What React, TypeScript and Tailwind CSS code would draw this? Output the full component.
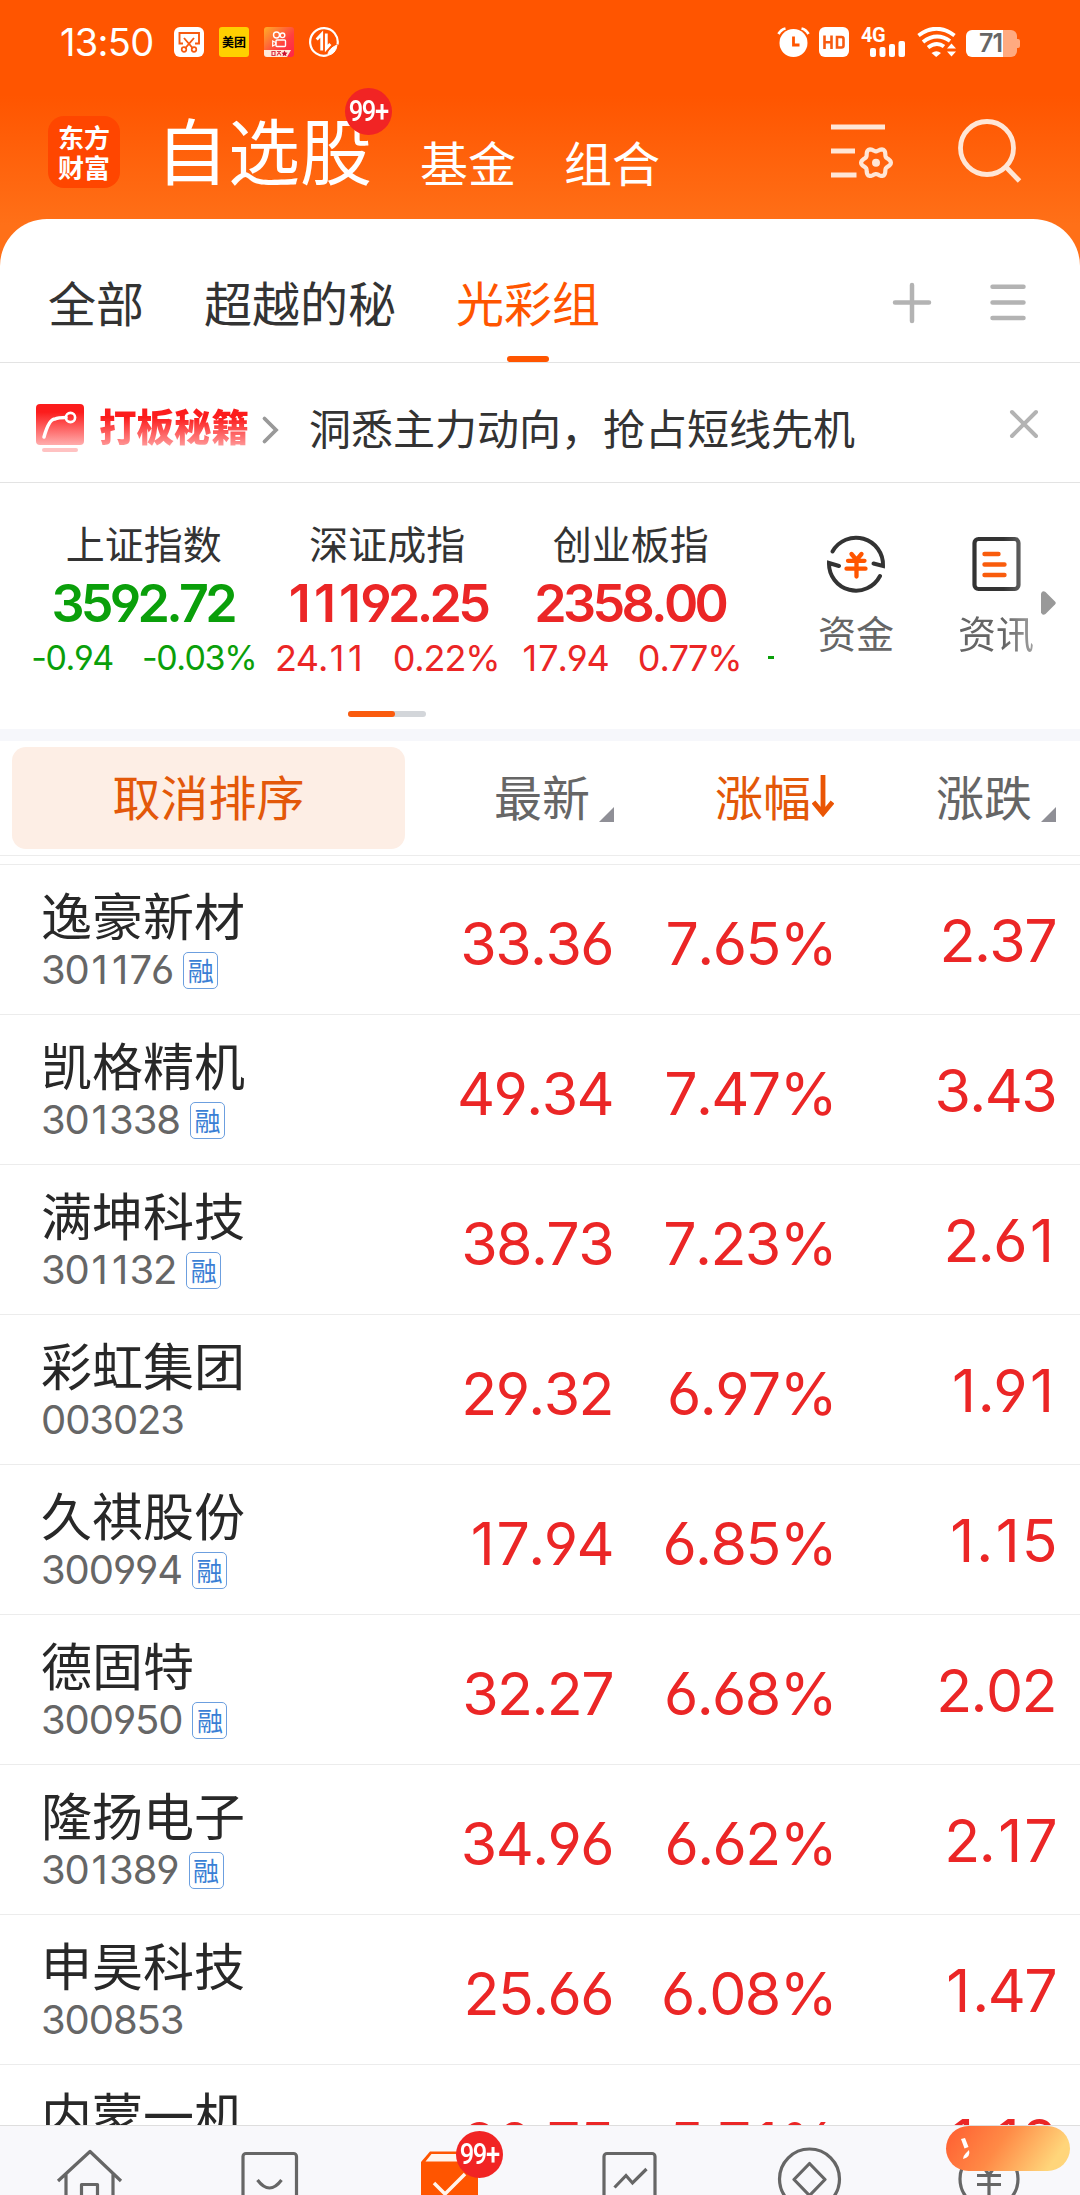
import React from "react";

type Stock = { name: string; code: string; margin: boolean; price: string; pct: string; chg: string };

const stocks: Stock[] = [
  { name: "逸豪新材", code: "301176", margin: true, price: "33.36", pct: "7.65%", chg: "2.37" },
  { name: "凯格精机", code: "301338", margin: true, price: "49.34", pct: "7.47%", chg: "3.43" },
  { name: "满坤科技", code: "301132", margin: true, price: "38.73", pct: "7.23%", chg: "2.61" },
  { name: "彩虹集团", code: "003023", margin: false, price: "29.32", pct: "6.97%", chg: "1.91" },
  { name: "久祺股份", code: "300994", margin: true, price: "17.94", pct: "6.85%", chg: "1.15" },
  { name: "德固特", code: "300950", margin: true, price: "32.27", pct: "6.68%", chg: "2.02" },
  { name: "隆扬电子", code: "301389", margin: true, price: "34.96", pct: "6.62%", chg: "2.17" },
  { name: "申昊科技", code: "300853", margin: false, price: "25.66", pct: "6.08%", chg: "1.47" },
  { name: "内蒙一机", code: "600967", margin: true, price: "20.75", pct: "5.71%", chg: "1.12" },
];

// Figures with a little air around the narrow "1".
function Digits({ text }: { text: string }) {
  return (
    <span className="whitespace-nowrap [font-feature-settings:'cv03','cv04'] [font-kerning:none]">
      {text.split(/(1)/).map((part, i) =>
        part === "1" ? (
          <span key={i} className="pl-[0.07em] pr-[0.06em]">
            1
          </span>
        ) : (
          part
        ),
      )}
    </span>
  );
}

// Outline of the six-lobed settings gear, centred on (cx, cy).
function gearPath(cx: number, cy: number) {
  const points = Array.from({ length: 72 }, (_, i) => {
    const a = (i / 72) * Math.PI * 2;
    const r = 13.1 + 1.8 * Math.cos(6 * a);
    return `${(cx + r * Math.cos(a)).toFixed(2)} ${(cy + r * Math.sin(a)).toFixed(2)}`;
  });
  return `M${points.join("L")}Z`;
}

function CountBadge() {
  return (
    <span className="flex h-[47px] w-[47px] items-center justify-center rounded-full bg-[#f12424] font-['Roboto',sans-serif] text-[29px] font-medium leading-none tracking-[-1.5px] text-white">
      <span className="block scale-x-[0.88] whitespace-nowrap">99+</span>
    </span>
  );
}

function StatusBar() {
  return (
    <div className="flex h-[84px] items-center pl-[60px] pr-[60px] text-white">
      <span className="w-[114px] font-['Inter',sans-serif] text-[38px] leading-[84px] tracking-[-0.7px]">13:50</span>
      <div className="flex gap-[15px]">
        <svg width="30" height="30" viewBox="0 0 30 30" fill="none">
          <rect width="30" height="30" rx="6" fill="#fff" />
          <path d="M9 16.500H5.500V6H25V16.500H21" stroke="#f75a10" strokeWidth="1.900" />
          <path d="M10 11l9 10.500M20 11l-9 10.500" stroke="#f75a10" strokeWidth="1.900" />
          <circle cx="10" cy="22.500" r="2.300" stroke="#f75a10" strokeWidth="1.700" />
          <circle cx="20" cy="22.500" r="2.300" stroke="#f75a10" strokeWidth="1.700" />
        </svg>
        <span className="flex h-[30px] w-[30px] items-center justify-center rounded-[3px] bg-[#ffd000] font-['Noto_Sans_CJK_SC',sans-serif] text-[12px] font-bold leading-none text-black">
          美团
        </span>
        <svg width="30" height="30" viewBox="0 0 30 30" fill="none">
          <defs>
            <linearGradient id="cam" x1="0" y1="0" x2="1" y2="1">
              <stop offset="0" stopColor="#ffae28" />
              <stop offset="0.6" stopColor="#ff4040" />
              <stop offset="1" stopColor="#ff2348" />
            </linearGradient>
          </defs>
          <rect width="30" height="30" rx="3" fill="url(#cam)" />
          <circle cx="12.500" cy="8" r="3" stroke="#fff" strokeWidth="1.400" />
          <circle cx="18.500" cy="8.300" r="2.300" stroke="#fff" strokeWidth="1.400" />
          <rect x="12" y="13" width="9.500" height="6.500" rx="1" stroke="#fff" strokeWidth="1.400" />
          <path d="M8.700 14v5l3-1.500v-2z" stroke="#fff" strokeWidth="1.200" />
          <path d="M0 23h27l-4 7H3q-3 0-3-3z" fill="#ffe9d8" />
          <path d="M8 24.500h3v4H8zM13 24.500h4M13 28.500l2-3 2 3" stroke="#e0394a" strokeWidth="1.200" />
          <path d="M20.500 23.500l1 2 2 .3-1.500 1.400.4 2-1.900-1-1.900 1 .4-2-1.500-1.400 2-.3z" fill="#c8102e" />
        </svg>
        <svg width="30" height="30" viewBox="0 0 30 30" fill="none" stroke="#fff">
          <path d="M28.500 17.500A13.800 13.800 0 1 0 18.500 28.300" strokeWidth="2.200" />
          <path d="M28 18q-1 9-9.500 10.500q1-7 9.500-10.500" fill="#fff" strokeWidth="1" />
          <path d="M12.700 23.500V7l-5 5.500M17.300 6.500v15l4-4.500" strokeWidth="2.800" />
        </svg>
      </div>
      <div className="ml-auto flex items-center">
        <svg width="33" height="30" viewBox="0 0 33 30" fill="none">
          <circle cx="16.500" cy="16" r="14" fill="#fff" />
          <path d="M1.500 7Q4 2.500 8.500 1.500M31.500 7Q29 2.500 24.500 1.500" stroke="#fff" strokeWidth="2.800" />
          <path d="M16.500 9.500v8.500h6" stroke="#ff5500" strokeWidth="2.800" />
        </svg>
        <svg className="ml-[9px]" width="30" height="30" viewBox="0 0 30 30" fill="none">
          <rect width="30" height="30" rx="6" fill="#fff" />
          <path d="M5.500 8.500v13.500M12.500 8.500v13.500M5.500 15.200h7M18 10h4.500q2 0 2 2v6.500q0 2-2 2H18z" stroke="#f75a10" strokeWidth="2.600" />
        </svg>
        <div className="relative ml-[12px] h-[30px] w-[44px]">
          <span className="absolute left-0 top-0 font-['Roboto',sans-serif] text-[20px] font-bold leading-[16px] tracking-[-0.5px]">4G</span>
          <svg className="absolute inset-0" width="44" height="30" viewBox="0 0 44 30" fill="#fff">
            <rect x="9" y="21" width="6" height="9" rx="2" />
            <rect x="18.500" y="20" width="6" height="10" rx="2" />
            <rect x="28" y="17" width="6" height="13" rx="2" />
            <rect x="37.500" y="14" width="6.500" height="16" rx="2" />
          </svg>
        </div>
        <svg className="ml-[12px]" width="40" height="30" viewBox="0 0 40 30" fill="none">
          <path d="M1.500 8.500Q19.500-5 37.500 8.500M6 15Q19.500 4.500 33 14M11 20.500Q19.500 14 27 19.500" stroke="#fff" strokeWidth="3.900" />
          <path d="M14.500 26q5-3.500 9.500 0l-4.800 4z" fill="#fff" />
          <path d="M30 21.500l4.500-5 4.500 5zM30 24.500l4.500 5 4.500-5z" fill="#fff" />
        </svg>
        <div className="ml-[9px] mt-[3px] flex h-[27px] items-center">
          <div className="flex h-[27px] w-[51px] items-center justify-center rounded-[6px] bg-[linear-gradient(90deg,#fff_0_37px,#ffaa80_37px)] pr-[2px] font-['Inter',sans-serif] text-[25px] font-semibold leading-none tracking-[-1px] text-[#666]">
            71
          </div>
          <div className="h-[9px] w-[3px] rounded-r-[2px] bg-[#ffaa80]" />
        </div>
      </div>
    </div>
  );
}

function TitleBar() {
  return (
    <div className="flex h-[135px] items-start pl-[48px] pr-[57px] font-['Noto_Sans_CJK_SC',sans-serif] text-white">
      <div className="mt-[32px] flex h-[72px] w-[72px] flex-col items-center justify-center rounded-[16px] bg-[#ff4600] text-[26px] font-bold leading-[30px]">
        <span>东方</span>
        <span>财富</span>
      </div>
      <div className="relative ml-[36px] w-[216px]">
        <h1 className="mt-[26px] whitespace-nowrap text-[72px] leading-[76px]">自选股</h1>
        <div className="absolute left-[189px] top-[4px]">
          <CountBadge />
        </div>
      </div>
      <span className="ml-[48px] mt-[47px] text-[48px] leading-[60px]">基金</span>
      <span className="ml-[48px] mt-[47px] text-[48px] leading-[60px]">组合</span>
      <svg className="ml-auto mt-[36px]" width="66" height="66" viewBox="0 0 66 66" fill="none" stroke="#ffe6d6" strokeWidth="5">
        <path d="M0 7h54M0 31h24M0 55h25.500" />
        <path d={gearPath(45, 42.7)} strokeWidth="4.200" strokeLinejoin="round" />
        <circle cx="45" cy="42.700" r="4" fill="#ffe6d6" stroke="none" />
      </svg>
      <svg className="ml-[60px] mt-[34px]" width="66" height="66" viewBox="0 0 66 66" fill="none" stroke="#ffe6d6" strokeWidth="4.800">
        <circle cx="30" cy="30" r="26.500" />
        <path d="M49 49l13.500 14" />
      </svg>
    </div>
  );
}

function GroupTabs() {
  return (
    <nav className="flex h-[144px] items-start border-b border-[#e3e3e3] pl-[48px] pr-[54px] pt-[46px] font-['Noto_Sans_CJK_SC',sans-serif] text-[48px] leading-[72px] text-[#333]">
      <span>全部</span>
      <span className="ml-[60px]">超越的秘</span>
      <span className="relative ml-[60px] text-[#ff5500]">
        光彩组
        <span className="absolute left-[51px] top-[91px] h-[6px] w-[42px] rounded-[3px] bg-[#ff5500]" />
      </span>
      <svg className="ml-auto mt-[17px]" width="40" height="42" viewBox="0 0 40 42" stroke="#b3b3b3" strokeWidth="4.500" strokeLinecap="round">
        <path d="M20 3v36M3 20.500h34" />
      </svg>
      <svg className="ml-[58px] mt-[17px]" width="36" height="42" viewBox="0 0 36 42" stroke="#b3b3b3" strokeWidth="4.500" strokeLinecap="round">
        <path d="M2.500 4.700h31M2.500 20.500h31M2.500 36h31" />
      </svg>
    </nav>
  );
}

function Promo() {
  return (
    <div className="flex h-[120px] items-start border-b border-[#e3e3e3] pl-[36px] pr-[41px] font-['Noto_Sans_CJK_SC',sans-serif]">
      <svg className="mt-[41px]" width="48" height="50" viewBox="0 0 48 50" fill="none">
        <defs>
          <linearGradient id="promo" x1="0" y1="0" x2="0" y2="1">
            <stop offset="0.2" stopColor="#fc1c1c" />
            <stop offset="1" stopColor="#ffadad" />
          </linearGradient>
        </defs>
        <rect width="48" height="41" rx="4" fill="url(#promo)" />
        <path d="M8 33Q13 15 19 15Q22 13.500 30 13.500" stroke="#fff" strokeWidth="3.500" strokeLinecap="round" />
        <circle cx="34.500" cy="13.500" r="4.600" stroke="#fff" strokeWidth="2.600" />
        <rect x="6" y="44" width="36" height="4" rx="2" fill="#ffc2c2" />
      </svg>
      <span className="ml-[15px] mt-[37px] bg-[linear-gradient(180deg,#fc1c1c_35%,#ff9494_90%)] bg-clip-text text-[37.5px] font-black leading-[50px] text-transparent">
        打板秘籍
      </span>
      <svg className="ml-[12px] mt-[52px]" width="18" height="30" viewBox="0 0 18 30" fill="none" stroke="#999" strokeWidth="3.800" strokeLinecap="round">
        <path d="M3.500 3.500L15 15L3.500 26.500" />
      </svg>
      <span className="ml-[30px] mt-[36px] text-[42px] leading-[56px] text-[#333]">洞悉主力动向，抢占短线先机</span>
      <svg className="ml-auto mt-[46px]" width="30" height="30" viewBox="0 0 30 30" stroke="#b3b3b3" strokeWidth="4" strokeLinecap="round">
        <path d="M3 3l24 24M27 3L3 27" />
      </svg>
    </div>
  );
}

type IndexProps = { name: string; value: string; diff: string; pct: string; down?: boolean };

function IndexCell({ name, value, diff, pct, down }: IndexProps) {
  return (
    <div className={`flex w-[243.5px] flex-none flex-col items-center ${down ? "text-[#0a9f0a]" : "text-[#eb2626]"}`}>
      <span className="font-['Noto_Sans_CJK_SC',sans-serif] text-[39px] leading-[54px] text-[#333]">{name}</span>
      <span className="mt-[5px] pr-[2px] font-['Inter',sans-serif] text-[52px] font-semibold leading-[60px] tracking-[-3.7px]">
        <Digits text={value} />
      </span>
      <div
        className={`flex whitespace-nowrap font-['Inter',sans-serif] leading-[48px] ${
          down ? "gap-[29px] text-[34px] tracking-[-1.4px]" : "gap-[29px] text-[36px] tracking-[-1.1px]"
        }`}
      >
        <Digits text={diff} />
        <Digits text={pct} />
      </div>
    </div>
  );
}

function IndexPanel() {
  return (
    <section className="h-[246px] pt-[32px]">
      <div className="flex h-[184px]">
        <div className="flex w-[776px] overflow-hidden pl-[22px]">
          <IndexCell name="上证指数" value="3592.72" diff="-0.94" pct="-0.03%" down />
          <IndexCell name="深证成指" value="11192.25" diff="24.11" pct="0.22%" />
          <IndexCell name="创业板指" value="2358.00" diff="17.94" pct="0.77%" />
          <span className="ml-[15px] mt-[141px] h-[3px] w-[6px] bg-[#0a9f0a]" />
        </div>
        <div className="ml-[41px] flex w-[78px] flex-col items-center pt-[19px]">
          <svg width="60" height="60" viewBox="0 0 60 60" fill="none" stroke="#333" strokeWidth="4" strokeLinecap="round">
            <path d="M6.500 17.500A27 27 0 0 1 57 32L47.500 29.500" />
            <path d="M54 42A27 27 0 0 1 3 29L13 32" />
            <path d="M25.500 20l5 6 5-6M22 26.800h16.500M20.500 34.700h19M30.500 27v15.500" stroke="#ff5500" strokeWidth="4.300" />
          </svg>
          <span className="mt-[11px] font-['Noto_Sans_CJK_SC',sans-serif] text-[38px] leading-[54px] text-[#666]">资金</span>
        </div>
        <div className="ml-[62px] flex w-[78px] flex-col items-center pt-[19px] [mask-image:linear-gradient(90deg,#000_60%,rgba(0,0,0,.6))]">
          <svg width="60" height="60" viewBox="0 0 60 60" fill="none" strokeLinecap="round">
            <rect x="8.500" y="5" width="44" height="50" rx="4" stroke="#333" strokeWidth="4.200" />
            <path d="M18.500 20h14M18.500 30.500h20M18.500 41h20" stroke="#f95c0c" strokeWidth="4.400" />
          </svg>
          <span className="mt-[11px] font-['Noto_Sans_CJK_SC',sans-serif] text-[38px] leading-[54px] text-[#666]">资讯</span>
        </div>
        <svg className="ml-[6px] mt-[76px] flex-none" width="15" height="24" viewBox="0 0 15 24" fill="#999">
          <path d="M0 2.500Q1.500-1 4.500 1L14 10.500q1.500 1.500 0 3L4.500 23Q1.500 25 0 21.500z" />
        </svg>
      </div>
      <div className="ml-[348px] mt-[12px] h-[6px] w-[78px] rounded-full bg-[#d3d6da]">
        <div className="h-[6px] w-[47px] rounded-full bg-[#fa5b0e]" />
      </div>
    </section>
  );
}

function Corner() {
  return (
    <svg className="ml-[9px] mt-[40px]" width="15" height="15" viewBox="0 0 15 15" fill="#8f8f96">
      <path d="M15 0V15H0z" />
    </svg>
  );
}

function SortHeader() {
  return (
    <div className="flex h-[115px] border-b border-[#ececec] pl-[12px] pt-[6px] font-['Noto_Sans_CJK_SC',sans-serif] text-[48px] leading-[90px] text-[#666]">
      <button className="h-[102px] w-[393px] rounded-[14px] bg-[#fdeee5] pb-[6px] leading-[90px] text-[#e35809]">取消排序</button>
      <div className="ml-[89px] flex items-center pb-[13px]">
        最新
        <Corner />
      </div>
      <div className="ml-[101px] flex items-center pb-[13px] text-[#e35809]">
        涨幅
        <svg className="ml-[1px] mt-[3px]" width="22" height="42" viewBox="0 0 22 42" fill="none" stroke="#ea5504" strokeWidth="4.800">
          <path d="M11 0v38M1.500 27L11 38.500L20.500 27" />
        </svg>
      </div>
      <div className="ml-[102px] flex items-center pb-[13px]">
        涨跌
        <Corner />
      </div>
    </div>
  );
}

function Figure({ text, className }: { text: string; className: string }) {
  return (
    <span className={`text-right text-[59px] leading-[62px] tracking-[-1.6px] ${className}`}>
      <Digits text={text} />
    </span>
  );
}

function Row({ s }: { s: Stock }) {
  return (
    <div className="flex h-[150px] flex-none border-t border-[#ececec] font-['Inter',sans-serif] text-[#eb2626]">
      <div className="w-[340px] pl-[41px] pt-[17px]">
        <div className="font-['Noto_Sans_CJK_SC',sans-serif] text-[51px] leading-[64px] text-[#282828]">{s.name}</div>
        <div className="mt-[2px] flex h-[44px] items-center">
          <span className="text-[40px] leading-[44px] tracking-[-1.1px] text-[#666]">
            <Digits text={s.code} />
          </span>
          {s.margin && (
            <span className="ml-[10px] flex h-[37px] w-[35px] items-center justify-center rounded-[5px] border-[1.5px] border-[#6c9fdf] font-['Noto_Sans_CJK_SC',sans-serif] text-[26px] leading-[30px] text-[#3a7fd5]">
              融
            </span>
          )}
        </div>
      </div>
      <Figure text={s.price} className="w-[273px] pt-[48px]" />
      <Figure text={s.pct} className="w-[223px] pt-[48px]" />
      <Figure text={s.chg} className="w-[220px] pt-[45px]" />
    </div>
  );
}

function BottomNav() {
  return (
    <nav className="relative flex h-[70px] flex-none justify-between border-t border-[#dedede] bg-[#f8f8fb] pl-[55px] pr-[56px]">
      <svg width="70" height="69" viewBox="55 2126 70 69" fill="none" stroke="#666" strokeWidth="3.200">
        <path d="M58 2181L90 2151.500L121 2181M66 2174v30M113 2174v30M81.500 2200v-15.500h16v20" strokeLinejoin="round" />
      </svg>
      <svg width="70" height="69" viewBox="235 2126 70 69" fill="none" stroke="#666" strokeWidth="3.200">
        <rect x="243" y="2153.500" width="53.500" height="60" rx="3" />
        <path d="M257.500 2180q12 16 24 0" />
      </svg>
      <div className="relative">
        <svg width="70" height="69" viewBox="415 2126 70 69" fill="none">
          <path d="M421 2162l9-10.500h48v44h-57z" fill="#ff5500" />
          <path d="M425.500 2161.500l6-7.500h44v7.500z" fill="#fff4ec" />
          <path d="M434 2183l11 11 20-20" stroke="#fff4ec" strokeWidth="3.500" />
        </svg>
        <div className="absolute left-[41px] top-[5px]">
          <CountBadge />
        </div>
      </div>
      <svg width="70" height="69" viewBox="594 2126 70 69" fill="none" stroke="#666" strokeWidth="3.200">
        <rect x="604" y="2153.500" width="51" height="60" rx="3" />
        <path d="M614.500 2187.500l11.500-12 6.500 7.500 14-14" />
      </svg>
      <svg width="70" height="69" viewBox="774 2126 70 69" fill="none" stroke="#666" strokeWidth="3.200">
        <circle cx="809.500" cy="2179" r="30" />
        <path d="M809.500 2163.500l15.500 16-15.500 16-15.500-16z" strokeLinejoin="round" />
      </svg>
      <svg width="70" height="69" viewBox="954 2126 70 69" fill="none" stroke="#666" strokeWidth="3.200">
        <circle cx="989" cy="2179" r="29" />
        <path d="M977 2175.500h24M977 2184.500h24M989 2175v25M982 2165l7 10 7-10" />
      </svg>
      <svg className="absolute left-[945px] top-0" width="127" height="45" viewBox="0 0 127 45">
        <defs>
          <linearGradient id="pill" x1="0" y1="0" x2="1" y2="0.25">
            <stop offset="0.1" stopColor="#ff6635" />
            <stop offset="0.5" stopColor="#ff8a46" />
            <stop offset="1" stopColor="#ffd57a" />
          </linearGradient>
        </defs>
        <rect x="1" width="124" height="45" rx="22.500" fill="url(#pill)" />
        <path d="M16 13l4-1 3.500 9-4 1.500zM24 24q2 7-6 9 0-3 3-6z" fill="#fff" />
      </svg>
    </nav>
  );
}

export default function App() {
  return (
    <div className="flex h-[2195px] w-[1080px] flex-col overflow-hidden bg-[linear-gradient(180deg,#ff5500_95px,#ff7018_225px)]">
      <StatusBar />
      <TitleBar />
      <main className="flex min-h-0 flex-1 flex-col overflow-hidden rounded-t-[47px] bg-white">
        <GroupTabs />
        <Promo />
        <IndexPanel />
        <div className="h-[12px] flex-none bg-[#f6f7fb]" />
        <SortHeader />
        <div className="flex min-h-0 flex-1 flex-col overflow-hidden pt-[8px]">
          {stocks.map((s) => (
            <Row key={s.code} s={s} />
          ))}
        </div>
      </main>
      <BottomNav />
    </div>
  );
}
